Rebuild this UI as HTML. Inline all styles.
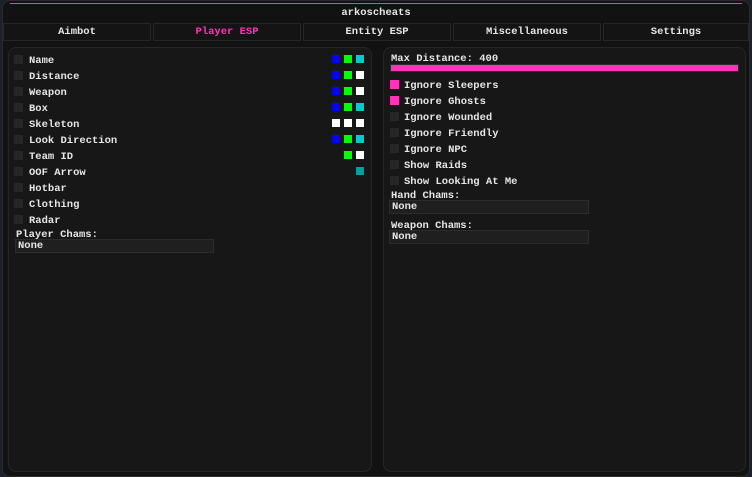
<!DOCTYPE html><html><head><style>
body{margin:0;width:752px;height:477px;background:#1b2029;overflow:hidden;font-family:"Liberation Mono",monospace;font-size:10.5px;font-weight:bold;color:#e6e6e6}
.win{position:absolute;left:2px;top:0;width:748px;height:477px;background:#121212;border-radius:8px;border:1px solid #2a2a2a;box-sizing:border-box}
.pl{position:absolute;left:10px;top:3px;width:732px;height:1px;background:#ff33bb}
.title{position:absolute;left:0;top:5px;width:752px;text-align:center;line-height:17px}
.tab{position:absolute;top:23px;height:18px;background:#141414;border:1px solid #262626;box-sizing:border-box;text-align:center;line-height:17px}
.panel{position:absolute;top:47px;height:425px;background:#171717;border:1px solid #262626;border-radius:8px;box-sizing:border-box}
.t{position:absolute;white-space:pre;line-height:12px;margin-top:1px}
.cb{position:absolute;width:9px;height:9px;background:#262626}
.cb.on{background:#ff33bb}
.sq{position:absolute;width:8px;height:8px}
.combo{position:absolute;height:14px;background:#1f1f1f;border:1px solid #2c2c2c;box-sizing:border-box;line-height:13px;padding-left:2px}
</style></head><body>
<div class="win"></div>
<div class="pl"></div>
<div class="title">arkoscheats</div>
<div class="tab" style="left:3px;width:148px">Aimbot</div>
<div class="tab" style="left:153px;width:148px;color:#ff33bb">Player ESP</div>
<div class="tab" style="left:303px;width:148px">Entity ESP</div>
<div class="tab" style="left:453px;width:148px">Miscellaneous</div>
<div class="tab" style="left:603px;width:146px">Settings</div>
<div class="panel" style="left:8px;width:364px"></div>
<div class="panel" style="left:383px;width:363px"></div>

<div class="cb" style="left:14px;top:55px"></div><div class="t" style="left:29px;top:54px">Name</div>
<div class="cb" style="left:14px;top:71px"></div><div class="t" style="left:29px;top:70px">Distance</div>
<div class="cb" style="left:14px;top:87px"></div><div class="t" style="left:29px;top:86px">Weapon</div>
<div class="cb" style="left:14px;top:103px"></div><div class="t" style="left:29px;top:102px">Box</div>
<div class="cb" style="left:14px;top:119px"></div><div class="t" style="left:29px;top:118px">Skeleton</div>
<div class="cb" style="left:14px;top:135px"></div><div class="t" style="left:29px;top:134px">Look Direction</div>
<div class="cb" style="left:14px;top:151px"></div><div class="t" style="left:29px;top:150px">Team ID</div>
<div class="cb" style="left:14px;top:167px"></div><div class="t" style="left:29px;top:166px">OOF Arrow</div>
<div class="cb" style="left:14px;top:183px"></div><div class="t" style="left:29px;top:182px">Hotbar</div>
<div class="cb" style="left:14px;top:199px"></div><div class="t" style="left:29px;top:198px">Clothing</div>
<div class="cb" style="left:14px;top:215px"></div><div class="t" style="left:29px;top:214px">Radar</div>
<div class="t" style="left:16px;top:228px">Player Chams:</div>
<div class="combo" style="left:15px;top:239px;width:199px">None</div>

<div class="sq" style="left:332px;top:55px;background:#0000ff"></div><div class="sq" style="left:344px;top:55px;background:#00ff00"></div><div class="sq" style="left:356px;top:55px;background:#00cccc"></div>
<div class="sq" style="left:332px;top:71px;background:#0000ff"></div><div class="sq" style="left:344px;top:71px;background:#00ff00"></div><div class="sq" style="left:356px;top:71px;background:#fff"></div>
<div class="sq" style="left:332px;top:87px;background:#0000ff"></div><div class="sq" style="left:344px;top:87px;background:#00ff00"></div><div class="sq" style="left:356px;top:87px;background:#fff"></div>
<div class="sq" style="left:332px;top:103px;background:#0000ff"></div><div class="sq" style="left:344px;top:103px;background:#00ff00"></div><div class="sq" style="left:356px;top:103px;background:#00cccc"></div>
<div class="sq" style="left:332px;top:119px;background:#fff"></div><div class="sq" style="left:344px;top:119px;background:#fff"></div><div class="sq" style="left:356px;top:119px;background:#fff"></div>
<div class="sq" style="left:332px;top:135px;background:#0000ff"></div><div class="sq" style="left:344px;top:135px;background:#00ff00"></div><div class="sq" style="left:356px;top:135px;background:#00cccc"></div>
<div class="sq" style="left:344px;top:151px;background:#00ff00"></div><div class="sq" style="left:356px;top:151px;background:#fff"></div>
<div class="sq" style="left:356px;top:167px;background:#00a0a0"></div>

<div class="t" style="left:391px;top:52px">Max Distance: 400</div>
<div style="position:absolute;left:390px;top:64px;width:349px;height:8px;background:#ff33bb;border:1px solid #2a2a2a;box-sizing:border-box"></div>
<div class="cb on" style="left:390px;top:80px"></div><div class="t" style="left:404px;top:79px">Ignore Sleepers</div>
<div class="cb on" style="left:390px;top:96px"></div><div class="t" style="left:404px;top:95px">Ignore Ghosts</div>
<div class="cb" style="left:390px;top:112px"></div><div class="t" style="left:404px;top:111px">Ignore Wounded</div>
<div class="cb" style="left:390px;top:128px"></div><div class="t" style="left:404px;top:127px">Ignore Friendly</div>
<div class="cb" style="left:390px;top:144px"></div><div class="t" style="left:404px;top:143px">Ignore NPC</div>
<div class="cb" style="left:390px;top:160px"></div><div class="t" style="left:404px;top:159px">Show Raids</div>
<div class="cb" style="left:390px;top:176px"></div><div class="t" style="left:404px;top:175px">Show Looking At Me</div>
<div class="t" style="left:391px;top:189px">Hand Chams:</div>
<div class="combo" style="left:389px;top:200px;width:200px">None</div>
<div class="t" style="left:391px;top:219px">Weapon Chams:</div>
<div class="combo" style="left:389px;top:230px;width:200px">None</div>
</body></html>
